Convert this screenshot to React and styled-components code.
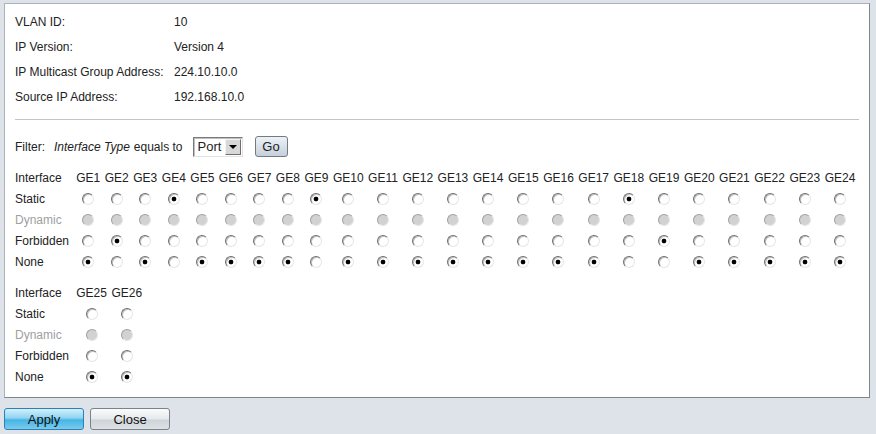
import React from 'react';
import styled, { createGlobalStyle } from 'styled-components';

const GlobalStyle = createGlobalStyle`
  body {
    margin: 0;
    background: #dde3e9;
    font-family: "Liberation Sans", Arial, sans-serif;
    font-size: 12px;
    color: #222;
  }
`;

const Panel = styled.div`
  box-sizing: border-box;
  width: 866px;
  margin: 3px 0 0 4px;
  padding: 5px 10px 10px;
  background: #fff;
  border: 1px solid;
  border-color: #aab2ba #7e868e #7e868e #aab2ba;
`;

const InfoGrid = styled.div`
  display: grid;
  grid-template-columns: 159px auto;
  grid-auto-rows: 25px;
  align-items: center;
`;

const Rule = styled.hr`
  margin: 10px 0 0;
  border: 0;
  border-top: 1px solid #c4c4c4;
`;

const FilterRow = styled.div`
  display: flex;
  align-items: center;
  height: 21px;
  margin-top: 16px;
`;

const FilterLabel = styled.span`
  margin-right: 9px;
`;

const Em = styled.i`
  margin-right: 4px;
`;

const SelectBox = styled.div`
  box-sizing: border-box;
  display: flex;
  align-items: center;
  justify-content: space-between;
  width: 50px;
  height: 20px;
  margin-left: 10px;
  padding: 1px 1px 1px 4px;
  border: 1px solid;
  border-color: #7a7a7a #e2e2e2 #e2e2e2 #7a7a7a;
  box-shadow: inset 1px 1px 0 #c0c0c0;
  font-size: 13px;
`;

const ArrowButton = styled.span`
  box-sizing: border-box;
  display: flex;
  align-items: center;
  justify-content: center;
  width: 16px;
  height: 16px;
  background: #d8d8d8;
  border: 1px solid;
  border-color: #f4f4f4 #6e6e6e #6e6e6e #f4f4f4;

  &::after {
    content: '';
    border-left: 4px solid transparent;
    border-right: 4px solid transparent;
    border-top: 4px solid #000;
  }
`;

const GoButton = styled.button`
  box-sizing: border-box;
  width: 33px;
  height: 21px;
  margin-left: 12px;
  padding: 0;
  font: inherit;
  font-size: 13px;
  color: #222;
  background: linear-gradient(#eef2f6, #c5d0da);
  border: 1px solid #6f7c88;
  border-radius: 3px;
`;

const PortTable = styled.table`
  border-collapse: collapse;
  margin-top: 10px;

  td {
    height: 21px;
    padding: 0 2.25px;
    text-align: center;
    vertical-align: middle;
    white-space: nowrap;
  }

  td:first-child {
    padding: 0;
    width: 59px;
    text-align: left;
  }
`;

const RowLabel = styled.td`
  color: ${p => (p.$disabled ? '#a0a0a0' : '#222')};
`;

const Radio = styled.input.attrs({ type: 'radio' })`
  appearance: none;
  display: block;
  box-sizing: border-box;
  width: 12px;
  height: 12px;
  margin: 0 auto;
  border-radius: 50%;
  border: 1px solid;
  border-color: #6e6e6e #e6e6e6 #e6e6e6 #6e6e6e;
  box-shadow: inset 1px 1px 0 #c0c0c0;
  background: #fff;

  &:checked {
    background: radial-gradient(circle, #000 0 2px, #fff 2.7px);
  }

  &:disabled {
    background: #d2d2d2;
    border-color: #a0a0a0 #e6e6e6 #e6e6e6 #a0a0a0;
    box-shadow: none;
  }
`;

const ButtonBar = styled.div`
  display: flex;
  gap: 6px;
  margin: 10px 0 0 4px;
`;

const ActionButton = styled.button`
  box-sizing: border-box;
  width: 80px;
  height: 22px;
  padding: 0;
  font: inherit;
  font-size: 13px;
  color: #111;
  border: 1px solid ${p => (p.$primary ? '#2d80b4' : '#7a828a')};
  border-radius: 3px;
  background: ${p =>
    p.$primary
      ? 'linear-gradient(#d2f0fc 0%, #8fd3f1 45%, #45b4e4 55%, #7ccbee 100%)'
      : 'linear-gradient(#fafbfc 0%, #e6e9ec 50%, #cfd4d9 55%, #dde1e5 100%)'};
`;

const info = [
  ['VLAN ID:', '10'],
  ['IP Version:', 'Version 4'],
  ['IP Multicast Group Address:', '224.10.10.0'],
  ['Source IP Address:', '192.168.10.0'],
];

const portModes = {
  GE4: 'static',
  GE9: 'static',
  GE18: 'static',
  GE2: 'forbidden',
  GE19: 'forbidden',
};

const rows = [
  { key: 'static', label: 'Static' },
  { key: 'dynamic', label: 'Dynamic', disabled: true },
  { key: 'forbidden', label: 'Forbidden' },
  { key: 'none', label: 'None' },
];

const range = (from, to) =>
  Array.from({ length: to - from + 1 }, (_, i) => `GE${from + i}`);

const PortGroup = ({ ports }) => (
  <PortTable>
    <tbody>
      <tr>
        <td>Interface</td>
        {ports.map(p => (
          <td key={p}>{p}</td>
        ))}
      </tr>
      {rows.map(row => (
        <tr key={row.key}>
          <RowLabel $disabled={row.disabled}>{row.label}</RowLabel>
          {ports.map(p => (
            <td key={p}>
              <Radio
                name={`port-${p}`}
                disabled={row.disabled}
                defaultChecked={(portModes[p] || 'none') === row.key}
              />
            </td>
          ))}
        </tr>
      ))}
    </tbody>
  </PortTable>
);

const App = () => (
  <>
    <GlobalStyle />
    <Panel>
      <InfoGrid>
        {info.map(([label, value]) => (
          <React.Fragment key={label}>
            <span>{label}</span>
            <span>{value}</span>
          </React.Fragment>
        ))}
      </InfoGrid>
      <Rule />
      <FilterRow>
        <FilterLabel>Filter:</FilterLabel>
        <Em>Interface Type</Em>
        <span>equals to</span>
        <SelectBox>
          <span>Port</span>
          <ArrowButton />
        </SelectBox>
        <GoButton>Go</GoButton>
      </FilterRow>
      <PortGroup ports={range(1, 24)} />
      <PortGroup ports={range(25, 26)} />
    </Panel>
    <ButtonBar>
      <ActionButton $primary>Apply</ActionButton>
      <ActionButton>Close</ActionButton>
    </ButtonBar>
  </>
);

export default App;
